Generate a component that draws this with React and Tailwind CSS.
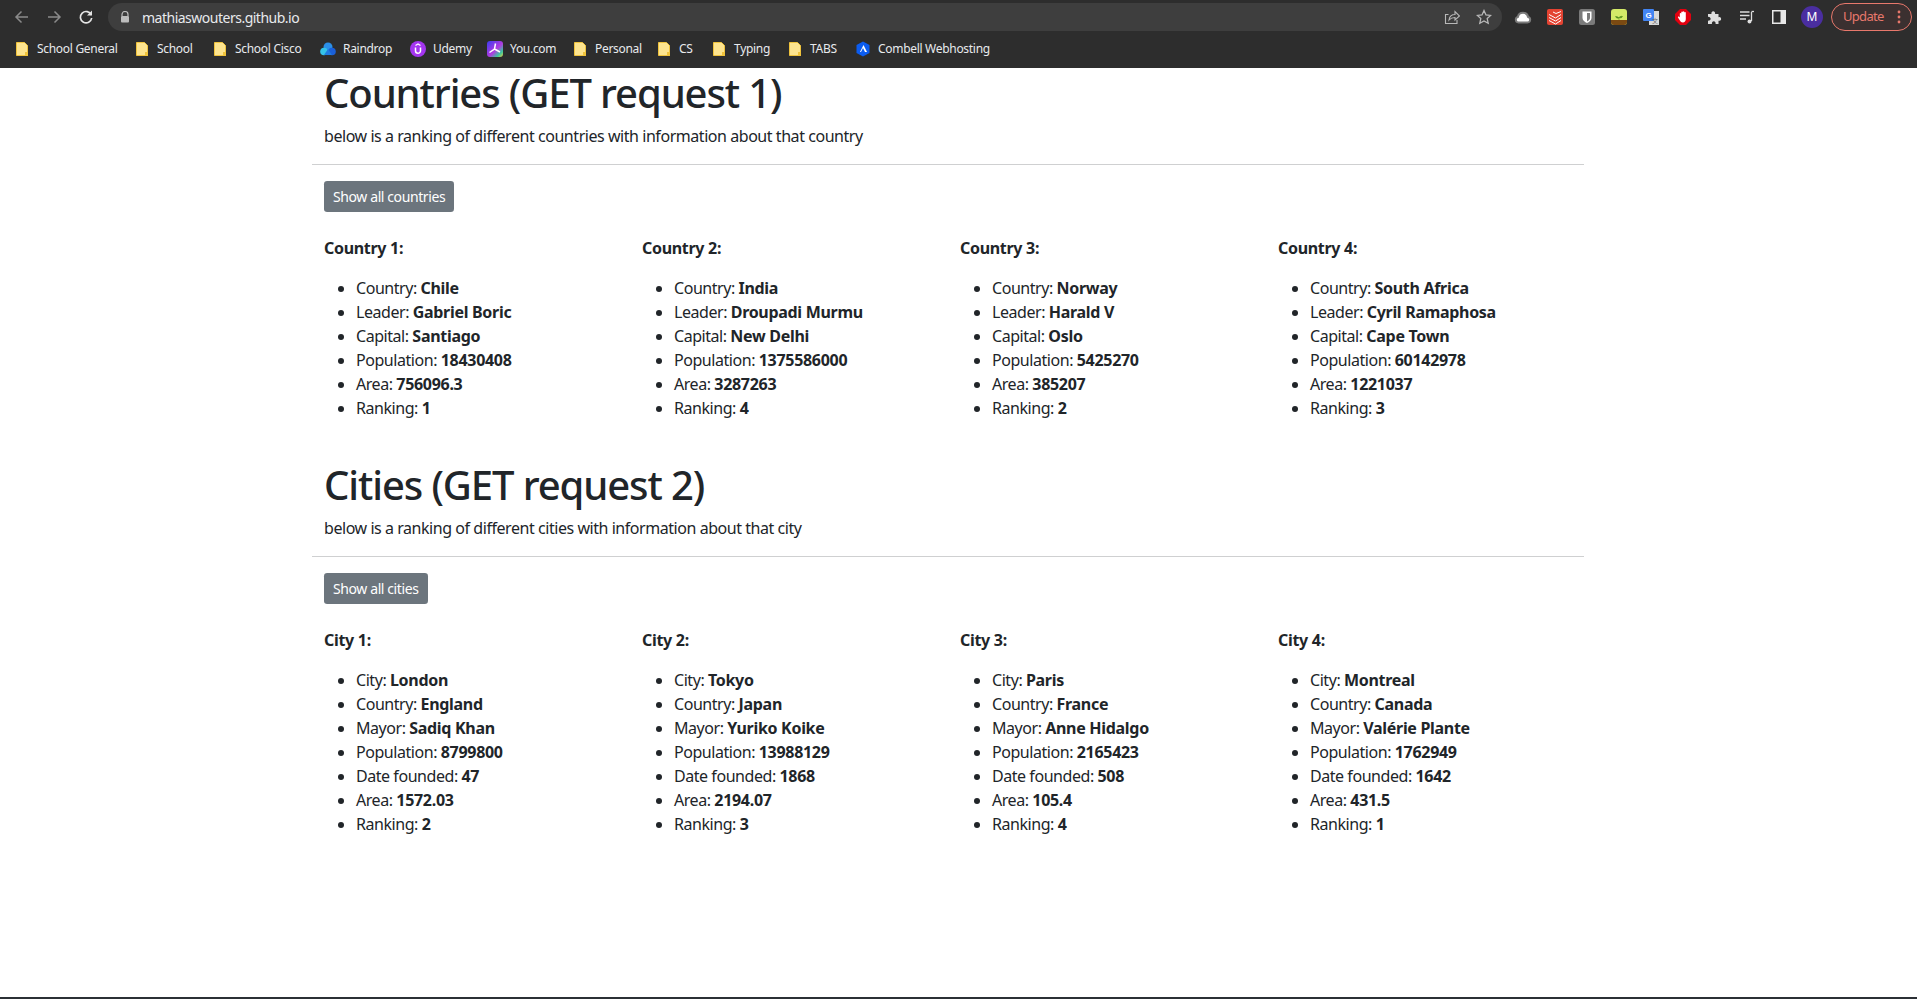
import { useMemo } from "react";

const font = "font-['Noto_Sans',sans-serif]";

const countries = [
  [["Country", "Chile"], ["Leader", "Gabriel Boric"], ["Capital", "Santiago"], ["Population", "18430408"], ["Area", "756096.3"], ["Ranking", "1"]],
  [["Country", "India"], ["Leader", "Droupadi Murmu"], ["Capital", "New Delhi"], ["Population", "1375586000"], ["Area", "3287263"], ["Ranking", "4"]],
  [["Country", "Norway"], ["Leader", "Harald V"], ["Capital", "Oslo"], ["Population", "5425270"], ["Area", "385207"], ["Ranking", "2"]],
  [["Country", "South Africa"], ["Leader", "Cyril Ramaphosa"], ["Capital", "Cape Town"], ["Population", "60142978"], ["Area", "1221037"], ["Ranking", "3"]],
];

const cities = [
  [["City", "London"], ["Country", "England"], ["Mayor", "Sadiq Khan"], ["Population", "8799800"], ["Date founded", "47"], ["Area", "1572.03"], ["Ranking", "2"]],
  [["City", "Tokyo"], ["Country", "Japan"], ["Mayor", "Yuriko Koike"], ["Population", "13988129"], ["Date founded", "1868"], ["Area", "2194.07"], ["Ranking", "3"]],
  [["City", "Paris"], ["Country", "France"], ["Mayor", "Anne Hidalgo"], ["Population", "2165423"], ["Date founded", "508"], ["Area", "105.4"], ["Ranking", "4"]],
  [["City", "Montreal"], ["Country", "Canada"], ["Mayor", "Valérie Plante"], ["Population", "1762949"], ["Date founded", "1642"], ["Area", "431.5"], ["Ranking", "1"]],
];

function Folder() {
  return (
    <svg width="16" height="16" viewBox="0 0 16 16">
      <path d="M2.500 1.500h8l3 3v10h-11z" fill="#fde48f" stroke="#f0c33c" />
      <path d="M11 11h3v4h-3z" fill="#f0c33c" />
    </svg>
  );
}

function Raindrop() {
  return (
    <svg width="16" height="16" viewBox="0 0 16 16">
      <circle cx="8" cy="6" r="4.500" fill="#2b8fe8" />
      <circle cx="4" cy="10.500" r="3.800" fill="#35c3e8" />
      <circle cx="12" cy="10.500" r="3.800" fill="#1a5fd8" />
      <path d="M4 14h8l-4-6z" fill="#1f7ae0" />
    </svg>
  );
}

function Udemy() {
  return (
    <svg width="16" height="16" viewBox="0 0 16 16">
      <circle cx="8" cy="8" r="8" fill="#a435f0" />
      <path d="M5.500 6.500v3.200a2.500 2.500 0 0 0 5 0V6.500" fill="none" stroke="#fff" strokeWidth="1.500" />
      <path d="M5.500 4.600 8 3l2.500 1.600" fill="none" stroke="#fff" strokeWidth="1.200" />
    </svg>
  );
}

function YouCom() {
  return (
    <svg width="16" height="16" viewBox="0 0 16 16">
      <defs>
        <linearGradient id="you" x1="0" y1="0" x2="1" y2="1">
          <stop offset="0" stopColor="#3b3bf0" />
          <stop offset="0.55" stopColor="#b03be0" />
          <stop offset="0.8" stopColor="#38c8a0" />
          <stop offset="1" stopColor="#e8d040" />
        </linearGradient>
      </defs>
      <rect width="16" height="16" rx="3" fill="url(#you)" />
      <path d="M8.500 2.500 7.500 8 2.500 11.500M7.500 8l5.500 3" fill="none" stroke="#fff" strokeWidth="1.500" />
    </svg>
  );
}

function Combell() {
  return (
    <svg width="16" height="16" viewBox="0 0 16 16">
      <path d="M8 .5 14.500 4v8L8 15.500 1.500 12V4z" fill="#0b5cf0" />
      <path d="M8.500 4 12 11H5z" fill="#fff" />
      <path d="M8 7 10 11H6z" fill="#0b5cf0" />
    </svg>
  );
}

const bookmarks = [
  { label: "School General", icon: <Folder />, cls: "w-[120px]" },
  { label: "School", icon: <Folder />, cls: "w-[78px]" },
  { label: "School Cisco", icon: <Folder />, cls: "w-[108px]" },
  { label: "Raindrop", icon: <Raindrop />, cls: "w-[90px]" },
  { label: "Udemy", icon: <Udemy />, cls: "w-[77px]" },
  { label: "You.com", icon: <YouCom />, cls: "w-[85px]" },
  { label: "Personal", icon: <Folder />, cls: "w-[84px]" },
  { label: "CS", icon: <Folder />, cls: "w-[55px]" },
  { label: "Typing", icon: <Folder />, cls: "w-[76px]" },
  { label: "TABS", icon: <Folder />, cls: "w-[68px]" },
  { label: "Combell Webhosting", icon: <Combell />, cls: "w-[140px]" },
];

const extensions = [
  <svg key="cloud" width="18" height="16" viewBox="0 0 18 16">
    <path d="M4.500 13.500a2.800 2.800 0 0 1-.6-5.500 5.200 5.200 0 0 1 10.200 0 2.800 2.800 0 0 1-.6 5.500z" fill="#fff" stroke="#7a7a7a" strokeWidth="2" />
  </svg>,
  <svg key="todo" width="16" height="16" viewBox="0 0 16 16">
    <rect width="16" height="16" rx="2" fill="#e44332" />
    <path d="M2 5.500 8.500 9 14 5.500M2 8.500 8.500 12 14 8.500M2 11.500 8.500 15 14 11.500M6 3l3 1.500L14 2.500" fill="none" stroke="#fff" strokeWidth="1" />
  </svg>,
  <svg key="bitwarden" width="16" height="16" viewBox="0 0 16 16">
    <rect width="16" height="16" rx="2.500" fill="#7a7a7a" />
    <path d="M3.500 2.500h9v6.500c0 2.500-2.500 4-4.500 5-2-1-4.500-2.500-4.500-5z" fill="#fff" />
    <path d="M8 4v8.500c1.500-.8 3-1.900 3-3.500V4z" fill="#7a7a7a" />
  </svg>,
  <svg key="plant" width="16" height="16" viewBox="0 0 16 16">
    <rect width="16" height="16" rx="3" fill="#d3ea68" />
    <path d="M0 11h16v2a3 3 0 0 1-3 3H3a3 3 0 0 1-3-3z" fill="#7b4a12" />
    <path d="M8 11V8.500M8 9C7 7.500 5.500 7.500 4.500 7.500 5 9 6.500 9.500 8 9zM8 8.500c1-1 2.500-1.500 3.500-1-.5 1.200-2 1.800-3.500 1z" fill="#4f8a1c" stroke="#4f8a1c" strokeWidth=".5" />
  </svg>,
  <svg key="translate" width="16" height="16" viewBox="0 0 16 16">
    <rect x="6" y="2" width="10" height="14" fill="#d9d9d9" />
    <rect width="11" height="12" rx="1" fill="#4285f4" />
    <text x="5.500" y="9" textAnchor="middle" fontSize="8" fontWeight="700" fontFamily="Liberation Sans" fill="#fff">G</text>
    <text x="12" y="13.500" textAnchor="middle" fontSize="6" fontFamily="Noto Sans CJK SC" fill="#666">文</text>
  </svg>,
  <svg key="block" width="16" height="16" viewBox="0 0 16 16">
    <path d="M5 0h6l5 5v6l-5 5H5l-5-5V5z" fill="#e2000f" />
    <path d="M4.800 8.500V4.500a.8.800 0 0 1 1.500 0V3a.8.800 0 0 1 1.500 0v-.2a.8.800 0 0 1 1.500 0V3.500a.8.800 0 0 1 1.500 0V10c0 2-1.200 3.500-3 3.500-1.500 0-2.200-.7-2.900-1.900L3 8.500c-.4-.8.600-1.400 1.100-.8z" fill="#fff" />
  </svg>,
  <svg key="puzzle" width="16" height="16" viewBox="0 0 16 16">
    <path d="M1 5h3.500a1.900 1.900 0 1 1 3.500 0H11.500v3.200a1.900 1.900 0 1 1 0 3.500V15H8.500a1.900 1.900 0 1 0-3.500 0H1v-3.500a1.900 1.900 0 1 0 0-3.500z" fill="#dedede" />
  </svg>,
  <svg key="queue" width="16" height="16" viewBox="0 0 16 16">
    <path d="M1 3h9.500M1 6.500h9.500M1 10h6" fill="none" stroke="#dedede" strokeWidth="1.300" />
    <path d="M12.500 3v9" fill="none" stroke="#dedede" strokeWidth="1.300" />
    <path d="M12.500 2.500h2.500" fill="none" stroke="#dedede" strokeWidth="1.300" />
    <circle cx="10.500" cy="12.500" r="2" fill="#dedede" />
  </svg>,
  <svg key="panel" width="16" height="16" viewBox="0 0 16 16">
    <path d="M1 1h14v14H1z" fill="#e8e8e8" />
    <path d="M2.500 2.500h7v11h-7z" fill="#2d2d2d" />
  </svg>,
];

function Toolbar() {
  return (
    <div className="flex h-[34px] items-center pl-[6px]">
      <div className="flex w-[32px] justify-center">
        <svg width="16" height="16" viewBox="0 0 16 16" fill="none" stroke="#8a8a8a" strokeWidth="1.500">
          <path d="M14 8H2M7.500 2.500 2 8l5.500 5.500" />
        </svg>
      </div>
      <div className="flex w-[32px] justify-center">
        <svg width="16" height="16" viewBox="0 0 16 16" fill="none" stroke="#8a8a8a" strokeWidth="1.500">
          <path d="M2 8h12M8.500 2.500 14 8l-5.500 5.500" />
        </svg>
      </div>
      <div className="flex w-[32px] justify-center">
        <svg width="16" height="16" viewBox="0 0 16 16" fill="none" stroke="#e4e4e4" strokeWidth="1.700">
          <path d="M13.300 6A5.700 5.700 0 1 0 13.700 9" />
          <path d="M14 1.500V6.500H9" fill="#e4e4e4" stroke="none" />
        </svg>
      </div>
      <div className={`ml-[6px] flex h-[28px] w-[1394px] items-center rounded-full bg-[#3e3e3e] pl-[12px] pr-[10px] ${font}`}>
        <svg width="10" height="12" viewBox="0 0 10 12">
          <path d="M2 5V3.500a3 3 0 0 1 6 0V5" fill="none" stroke="#bdbdbd" strokeWidth="1.200" />
          <rect x="1" y="5" width="8" height="6.500" rx="1" fill="#bdbdbd" />
        </svg>
        <span className="ml-[12px] text-[14px] tracking-[-0.5px] text-[#e8eaed]">mathiaswouters.github.io</span>
        <div className="ml-auto flex items-center gap-[16px]">
          <svg width="16" height="16" viewBox="0 0 16 16" fill="none" stroke="#b8b8b8" strokeWidth="1.100">
            <path d="M4.500 5.500H1.500v9h11.500V11" />
            <path d="M5 11c.5-3.500 3-5.500 6-5.500V2.500L15.500 7 11 11V8.500c-2.500 0-4.500.8-6 2.500z" />
          </svg>
          <svg width="16" height="16" viewBox="0 0 16 16" fill="none" stroke="#b8b8b8" strokeWidth="1.300">
            <path d="m8 1.500 2 4.400 4.700.5-3.500 3.200 1 4.700L8 11.900l-4.200 2.400 1-4.700L1.300 6.400 6 5.900z" />
          </svg>
        </div>
      </div>
      <div className="ml-[5px] flex items-center">
        {extensions.map((icon) => (
          <div key={icon.key} className="flex w-[32px] justify-center">
            {icon}
          </div>
        ))}
      </div>
      <div className={`ml-[6px] flex h-[22px] w-[22px] items-center justify-center rounded-full bg-[#4a2ea0] text-[12px] text-white ${font}`}>
        M
      </div>
      <div className={`ml-[8px] flex h-[28px] w-[81px] items-center rounded-full border border-[#e8786c] bg-[#3b3030] pl-[11px] text-[13px] tracking-[-0.7px] text-[#e8786c] ${font}`}>
        Update
        <svg className="ml-auto mr-[10px]" width="4" height="14" viewBox="0 0 4 14" fill="#e8786c">
          <circle cx="2" cy="2" r="1.400" />
          <circle cx="2" cy="7" r="1.400" />
          <circle cx="2" cy="12" r="1.400" />
        </svg>
      </div>
    </div>
  );
}

function BookmarksBar() {
  return (
    <div className={`flex h-[34px] items-center pb-[4px] pl-[14px] text-[12px] text-[#e8eaed] ${font}`}>
      {bookmarks.map((b) => (
        <div key={b.label} className={`flex shrink-0 items-center gap-[7px] whitespace-nowrap ${b.cls}`}>
          {b.icon}
          <span className="tracking-[-0.3px]">{b.label}</span>
        </div>
      ))}
    </div>
  );
}

function Section({ title, intro, button, name, items, className }) {
  const cards = useMemo(() => items.map((rows, i) => ({ rows, n: i + 1 })), [items]);
  return (
    <section className={className}>
      <div className="px-3">
        <h1 className="mb-[7px] text-[40px] font-medium leading-[49px] tracking-[-1.1px]">{title}</h1>
        <p className="mb-4 text-[16px] leading-6">{intro}</p>
      </div>
      <hr className="mb-4 border-t border-[#cfd0d1]" />
      <div className="px-3">
        <button className="h-[31px] rounded-[3.2px] bg-[#6c757d] px-[9px] text-[14px] tracking-[-0.4px] text-white">{button}</button>
      </div>
      <div className="mt-[24px] grid grid-cols-4">
        {cards.map((c) => (
          <div key={c.n} className="px-3">
            <p className="mb-4 font-bold leading-6 tracking-[-0.3px]">
              {name} {c.n}:
            </p>
            <ul className="list-disc pl-8">
              {c.rows.map(([k, v]) => (
                <li key={k} className="leading-6">
                  {k}: <b className="font-bold tracking-[-0.3px]">{v}</b>
                </li>
              ))}
            </ul>
          </div>
        ))}
      </div>
    </section>
  );
}

export default function App() {
  return (
    <div className="flex h-[999px] flex-col overflow-hidden bg-white">
      <header className="h-[68px] shrink-0 bg-[#2d2d2d]">
        <Toolbar />
        <BookmarksBar />
      </header>
      <main className={`flex-1 pl-[312px] text-[16px] tracking-[-0.45px] text-[#212529] ${font}`}>
        <div className="w-[1272px]">
          <Section
            title="Countries (GET request 1)"
            intro="below is a ranking of different countries with information about that country"
            button="Show all countries"
            name="Country"
            items={countries}
          />
          <Section
            className="mt-[40px]"
            title="Cities (GET request 2)"
            intro="below is a ranking of different cities with information about that city"
            button="Show all cities"
            name="City"
            items={cities}
          />
        </div>
      </main>
      <div className="h-[2px] shrink-0 bg-[#2b3035]" />
    </div>
  );
}
